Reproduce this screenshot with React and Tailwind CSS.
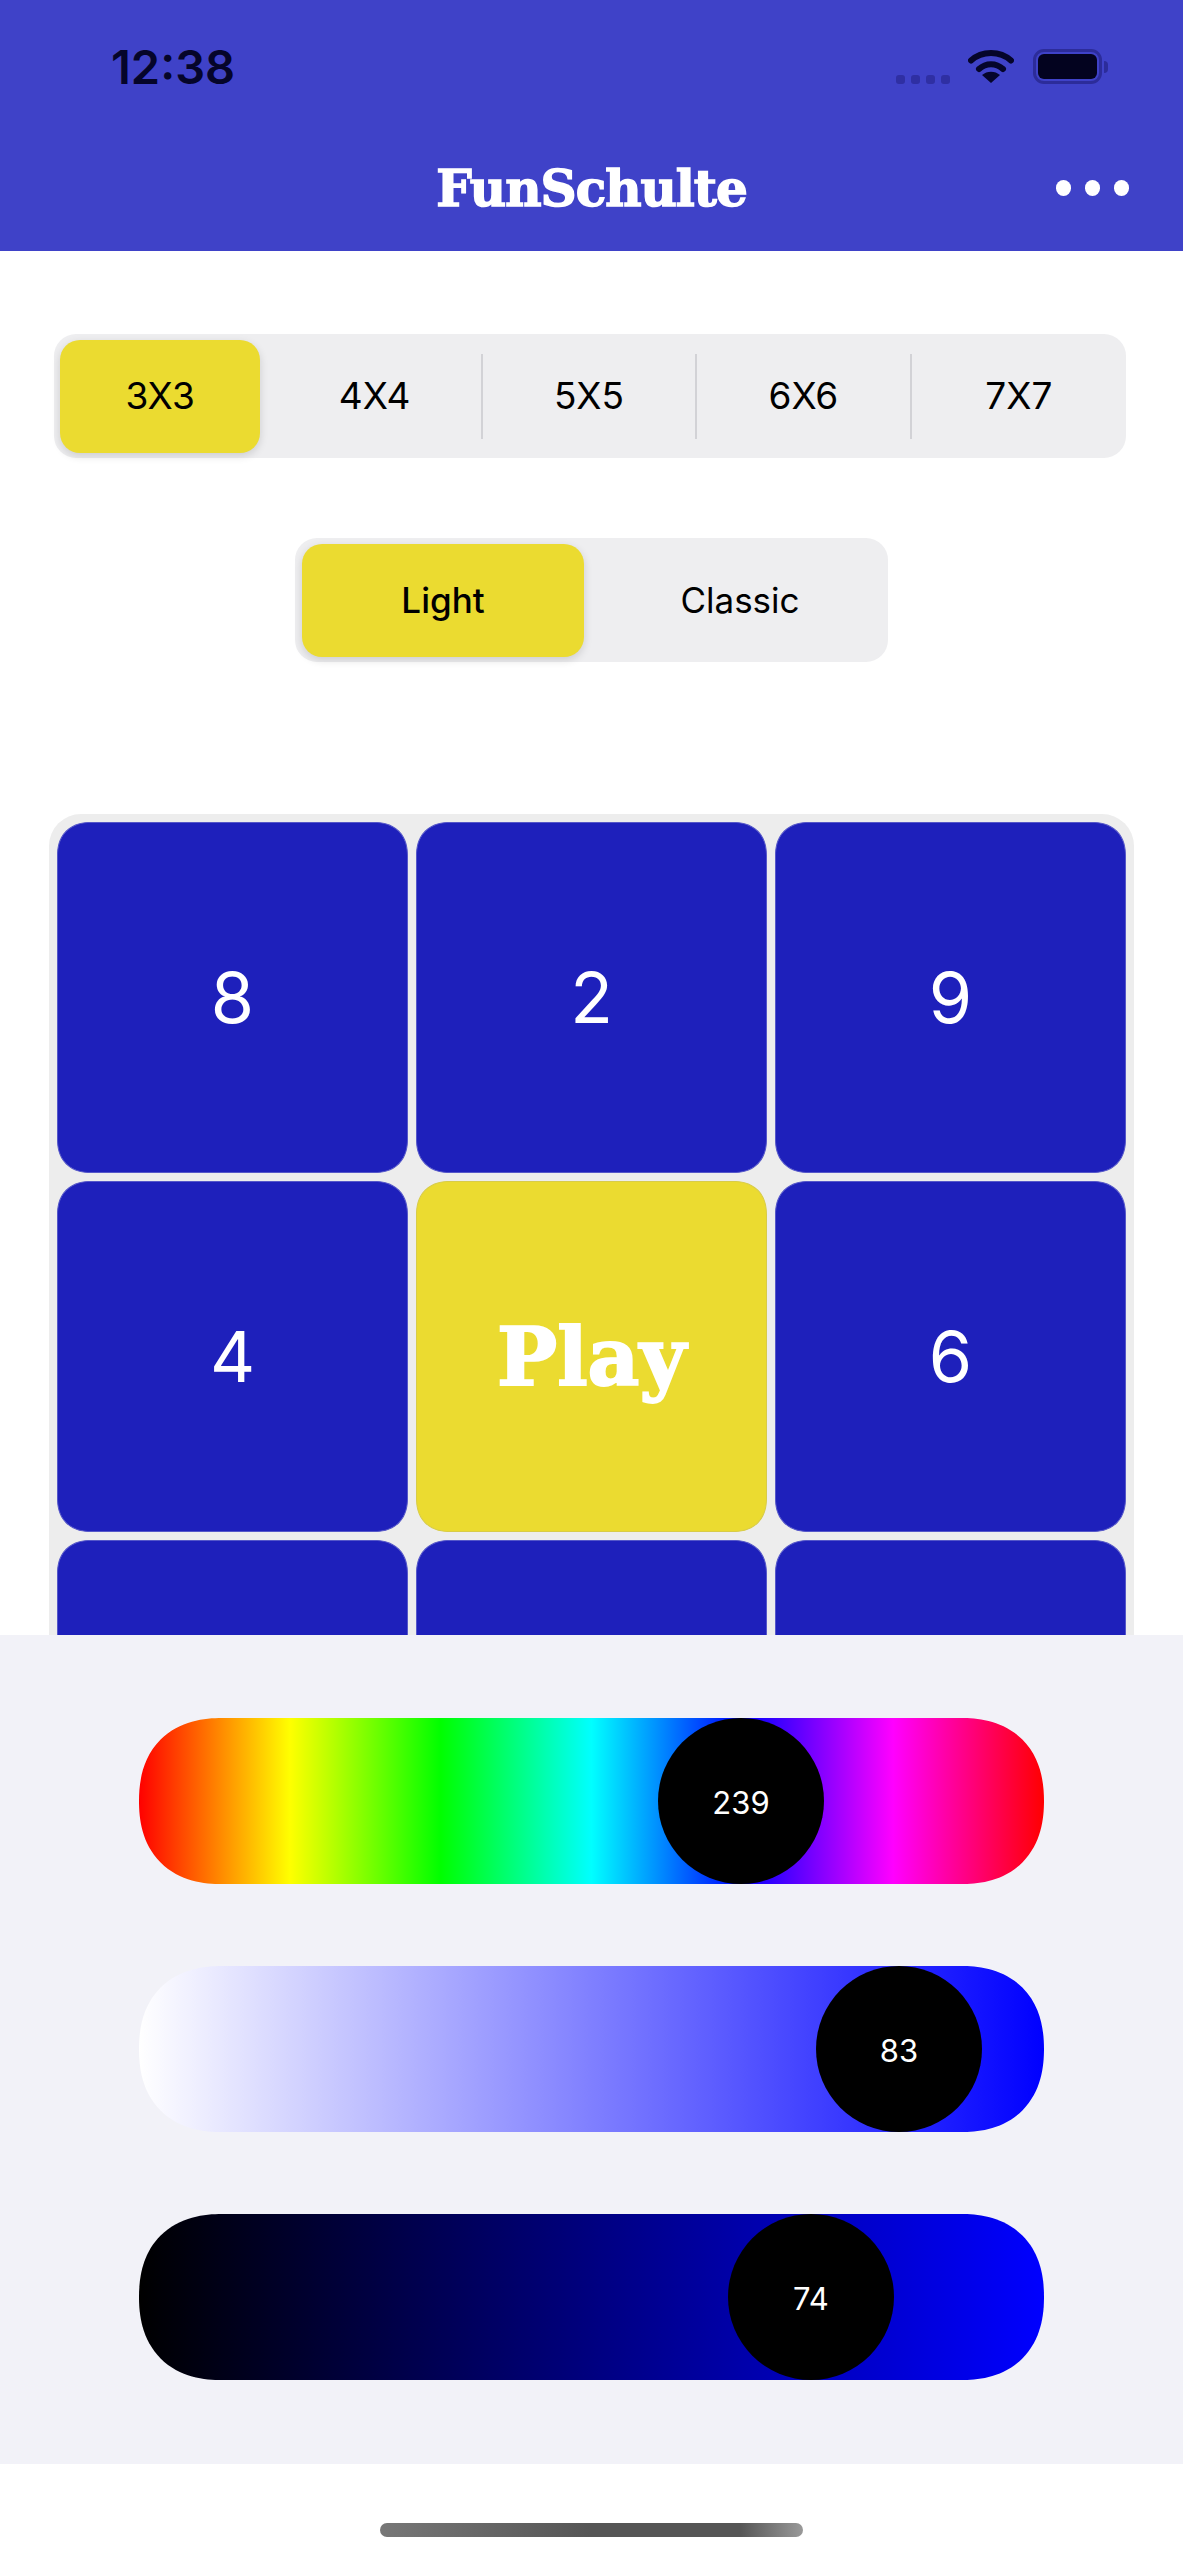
import React from 'react';

const sizes = ['3X3', '4X4', '5X5', '6X6', '7X7'];

const slabFont = "font-['DejaVu_Serif',serif] font-bold";

const StatusBar = () => (
    <div className="flex items-start justify-between h-[108px] pl-[111px] pr-[75px] pt-[44px]">
        <span className="text-[47px] leading-[46px] font-semibold text-[#05052a] font-['Inter',sans-serif]">12:38</span>
        <div className="flex items-start">
            {/* signal dots */}
            <div className="flex gap-[6px] mt-[31px] mr-[18px]">
                <div className="w-[9px] h-[9px] rounded-[3px] bg-[#2f2fa3]"></div>
                <div className="w-[9px] h-[9px] rounded-[3px] bg-[#2f2fa3]"></div>
                <div className="w-[9px] h-[9px] rounded-[3px] bg-[#2f2fa3]"></div>
                <div className="w-[9px] h-[9px] rounded-[3px] bg-[#2f2fa3]"></div>
            </div>
            <svg className="w-[46px] h-[34px] mt-[5px] mr-[19px]" viewBox="0 0 46 34" fill="none">
                <path d="M3 11.5 C14 1.5 32 1.5 43 11.5" stroke="#05052a" strokeWidth="6" strokeLinecap="round" />
                <path d="M11 20 C18 13.5 28 13.5 35 20" stroke="#05052a" strokeWidth="6" strokeLinecap="round" />
                <path d="M23 34 L14 26 C19 21.5 27 21.5 32 26 Z" fill="#05052a" />
            </svg>
            <div className="flex items-center mt-[5px]">
                <div className="w-[69px] h-[35px] rounded-[11px] border-[3px] border-[#2c2c9a] p-[2px]">
                    <div className="w-full h-full rounded-[6px] bg-[#03031f]"></div>
                </div>
                <div className="w-[4px] h-[12px] ml-[2px] rounded-r-full bg-[#2c2c9a]"></div>
            </div>
        </div>
    </div>
);

const NavBar = () => (
    <div className="relative flex items-center justify-center h-[143px] pt-[18px]">
        <h1 className={`text-[50px] leading-none text-white tracking-[-1px] [-webkit-text-stroke:1.5px_white] ${slabFont}`}>FunSchulte</h1>
        <div className="absolute right-[54px] top-[72px] flex gap-[14px]">
            <div className="w-[15px] h-[16px] rounded-full bg-white"></div>
            <div className="w-[15px] h-[16px] rounded-full bg-white"></div>
            <div className="w-[15px] h-[16px] rounded-full bg-white"></div>
        </div>
    </div>
);

const Cell = ({ children, yellow }) => (
    <div className={`flex items-center justify-center h-[351px] rounded-[34px] [corner-shape:superellipse(1.2)] border text-white ${yellow ? 'bg-[#ebdb30] border-[#d8cc48]' : 'bg-[#1e20bb] border-[#5557c9]'}`}>
        {children}
    </div>
);

const Digit = ({ n }) => (
    <span className="text-[70px] leading-none font-normal font-['Inter',sans-serif]">{n}</span>
);

const Slider = ({ barClass, offset, value }) => (
    <div className={`w-[905px] h-[166px] rounded-[83px] [corner-shape:superellipse(1.2)] ${barClass}`}>
        <div className={`flex items-center justify-center w-[166px] h-[166px] pt-[4px] rounded-full bg-black text-white text-[31px] font-['Inter',sans-serif] ${offset}`}>
            {value}
        </div>
    </div>
);

const App = () => {
    return (
        <div className="flex flex-col w-[1183px] h-[2560px] bg-white overflow-hidden font-['Inter',sans-serif]">
            <div className="bg-[#3f42c8] h-[251px] shrink-0">
                <StatusBar />
                <NavBar />
            </div>

            <div className="flex-1 overflow-hidden pt-[83px]">
                {/* Size tabs */}
                <div className="grid grid-cols-5 items-center ml-[54px] w-[1072px] h-[124px] rounded-[22px] bg-[#eeeef0]">
                    {sizes.map((s, i) => (
                        <div key={s} className="flex items-center justify-center">
                            {i === 0 ? (
                                <div className="flex items-center justify-center w-[200px] h-[113px] -ml-[2px] rounded-[20px] bg-[#ebdb30] shadow-[0_3px_8px_rgba(0,0,0,0.14)] text-[37px] text-black">
                                    {s}
                                </div>
                            ) : (
                                <div className={`flex-1 flex items-center justify-center h-[85px] text-[37px] text-black ${i < 4 ? 'border-r-2 border-[#d2d2d6]' : ''}`}>
                                    {s}
                                </div>
                            )}
                        </div>
                    ))}
                </div>

                {/* Theme tabs */}
                <div className="flex items-center mt-[80px] ml-[295px] w-[593px] h-[124px] rounded-[22px] bg-[#eeeef0] pl-[7px]">
                    <div className="flex items-center justify-center w-[282px] h-[113px] rounded-[20px] bg-[#ebdb30] shadow-[0_3px_8px_rgba(0,0,0,0.14)] text-[35px] font-medium text-black">
                        Light
                    </div>
                    <div className="flex-1 flex items-center justify-center pl-[8px] text-[35px] text-black">Classic</div>
                </div>

                {/* Board */}
                <div className="grid grid-cols-3 gap-[8px] mt-[152px] ml-[49px] w-[1085px] p-[8px] rounded-[32px] bg-[#ededed]">
                    <Cell><Digit n="8" /></Cell>
                    <Cell><Digit n="2" /></Cell>
                    <Cell><Digit n="9" /></Cell>
                    <Cell><Digit n="4" /></Cell>
                    <Cell yellow><span className={`text-[80px] leading-none text-white [-webkit-text-stroke:2px_white] ${slabFont}`}>Play</span></Cell>
                    <Cell><Digit n="6" /></Cell>
                    <Cell></Cell>
                    <Cell></Cell>
                    <Cell></Cell>
                </div>
            </div>

            {/* Color sliders */}
            <div className="flex flex-col items-center gap-[82px] h-[829px] shrink-0 pt-[83px] bg-[#f2f2f8]">
                <Slider barClass="bg-[linear-gradient(to_right,#f00,#ff0,#0f0,#0ff,#00f,#f0f,#f00)]" offset="ml-[519px]" value="239" />
                <Slider barClass="bg-[linear-gradient(to_right,#fff,#00f)]" offset="ml-[677px]" value="83" />
                <Slider barClass="bg-[linear-gradient(to_right,#000,#00f)]" offset="ml-[589px]" value="74" />
            </div>

            {/* Home indicator */}
            <div className="flex justify-center h-[96px] shrink-0 pt-[59px]">
                <div className="w-[423px] h-[14px] rounded-full bg-[linear-gradient(to_right,#777,#555_50%,#555_85%,#999)]"></div>
            </div>
        </div>
    );
};

export default App;
